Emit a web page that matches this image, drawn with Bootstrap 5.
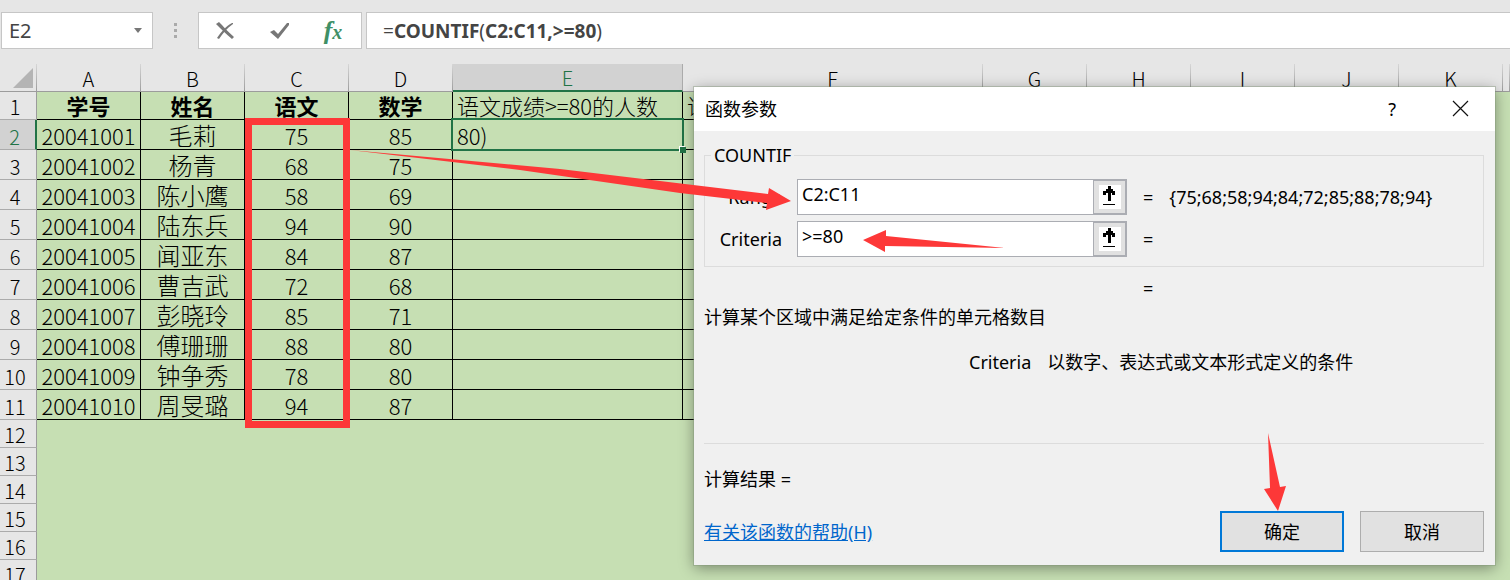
<!DOCTYPE html>
<html lang="zh-CN">
<head>
<meta charset="utf-8">
<meta name="viewport" content="width=device-width, initial-scale=1">
<title>COUNTIF</title>
<link href="https://cdn.jsdelivr.net/npm/bootstrap@5.3.0/dist/css/bootstrap.min.css" rel="stylesheet">
<style>
  body { background: #e6e6e6; color: #000; font-family: "Noto Sans CJK SC", sans-serif; }
  .workbook { min-height: 100vh; }
  .ui-font { font-family: "Noto Sans", "Noto Sans CJK SC", sans-serif; }

  .formula-bar { padding: 12px 0 15px 1px; background: #e6e6e6; }
  .bar-box { height: 37px; border: 1px solid #c6c6c6; background: #fff; }
  .name-box { width: 152px; padding: 0 9px 0 7px; }
  .name-box input { font-size: 20px; line-height: 24px; color: #444; min-width: 0; }
  .bar-tools { width: 164px; padding: 0 16px; }
  .bar-tools button { width: 24px; height: 24px; }
  .fx-mark { font: italic bold 26px/24px "Liberation Serif", serif; color: #3f9066; }
  .fx-mark small { font-size: 20px; }
  .grip { width: 45px; }
  .formula-input { font-size: 19px; line-height: 24px; color: #444; padding-left: 16px; border-right: 0; }

  .sheet-area { background: #c6dfb3; overflow: hidden; }
  .grid-table { table-layout: fixed; border-collapse: separate; border-spacing: 0; font-size: 22px; line-height: 24px; font-weight: 300; }
  .grid-table th, .grid-table td { padding: 0; height: 30px; text-align: center; vertical-align: bottom; white-space: nowrap; font-weight: inherit; }
  .grid-table .col-index { width: 37px; }
  .grid-table .col-std { width: 104px; }
  .grid-table .col-e { width: 230px; }
  .grid-table .col-f { width: 300px; }
  .grid-table thead th { height: 28px; font-size: 20px; background: #e6e6e6; border-bottom: 1px solid #9b9b9b; border-right: 1px solid; border-image: linear-gradient(#d8d8d8, #9b9b9b) 1; }
  .grid-table thead th.picked { background: #d2d2d2; color: #217346; border-image: none; border-right-color: #ababab; border-bottom: 2px solid #217346; }
  .grid-table tbody th { background: #e6e6e6; font-size: 20px; border-right: 1px solid #9b9b9b; border-bottom: 1px solid #ababab; padding-right: 6px; }
  .grid-table tbody th.picked { background: #d2d2d2; color: #217346; border-right: 2px solid #217346; }
  .grid-table .short th, .grid-table .short td { height: 28px; }
  .grid-table .data td { border-right: 1px solid #000; border-bottom: 1px solid #000; padding: 0 0 2px; }
  .data:not(.titles) td:nth-child(3) { font-size: 24px; }
  .grid-table .titles td { font-weight: 700; }
  .grid-table .data td.note, .grid-table .data td.editing { font-weight: 300; text-align: left; padding-left: 4px; }
  .corner { display: block; margin: 0 3px 3px auto; }
  .cursor-box { left: 451px; top: 118px; width: 233px; height: 33px; border: 2px solid #217346; }
  .cursor-box::after { content: ""; position: absolute; right: -4px; bottom: -4px; width: 6px; height: 6px; background: #217346; box-shadow: -1px -1px 0 #fff; }
  .range-box { left: 245px; top: 118px; width: 105px; height: 310px; border: 7px solid #fd3838; }

  .dialog-window { left: 694px; right: 15px; top: 87px; background: #f0f0f0; font-size: 18px; line-height: 24px; box-shadow: 0 3px 14px rgba(0,0,0,.4); outline: 1px solid rgba(130,150,120,.4); }
  .dialog-title { height: 44px; background: #fff; padding: 0 25px 0 11px; }
  .dialog-content { padding: 24px 11px 13px 10px; }
  .arg-group { border: 1px solid #dcdcdc; height: 112px; padding: 23px 0 0; position: relative; }
  .arg-group legend { position: absolute; top: -13px; left: 6px; width: auto; padding: 0 3px; background: #f0f0f0; font-size: 18px; line-height: 24px; }
  .arg-row { height: 36px; margin-bottom: 6px; }
  .arg-row label { width: 77px; text-align: right; }
  .arg-field { width: 330px; height: 36px; border: 1px solid #abadb3; background: #fff; margin-left: 15px; }
  .arg-field input { padding: 0 4px 7px; min-width: 0; }
  .arg-field button { width: 33px; background: #e1e1e1; border: solid #abadb3; border-width: 1px 1px 1px 1px; }
  .arg-value { padding-left: 16px; }
  .result-eq { margin: 9px 0 5px 439px; }
  .arg-help { margin: 21px 0 0 265px; gap: 16px; }
  .rule { border-top: 1px solid #dcdcdc; margin-top: 69px; }
  .calc-result { margin-top: 23px; }
  .dialog-foot { margin-top: 20px; gap: 16px; }
  .dialog-foot a { color: #0066cc; }
  .push { width: 124px; height: 41px; background: #e1e1e1; border: 1px solid #adadad; font-size: 18px; line-height: 24px; }
  .push.default { border: 2px solid #0078d7; }
  .bare { border: 0; background: transparent; padding: 0; outline: 0; }
  .marks { left: 0; top: 0; pointer-events: none; }
</style>
<script src="https://cdn.jsdelivr.net/npm/bootstrap@5.3.0/dist/js/bootstrap.bundle.min.js"></script>
</head>
<body>
<main class="workbook position-relative overflow-hidden d-flex flex-column vh-100">
  <div class="formula-bar ui-font d-flex">
    <div class="bar-box name-box d-flex align-items-center">
      <input class="bare flex-grow-1" type="text" value="E2" aria-label="名称框">
      <svg class="flex-shrink-0" width="9" height="5" aria-hidden="true"><path d="M0 0h8L4 5z" fill="#777"/></svg>
    </div>
    <div class="grip d-flex justify-content-center align-items-center">
      <svg width="3" height="16" fill="#aaa" aria-hidden="true"><path d="M0 0h3v3H0zM0 6h3v3H0zM0 12h3v3H0z"/></svg>
    </div>
    <div class="bar-box bar-tools d-flex justify-content-between align-items-center">
      <button class="bare d-flex align-items-center" type="button" aria-label="取消输入">
        <svg width="20" height="18" viewBox="0 0 20 18"><path d="M1 2L4 0C8 4 13 10 19 15L17 17C11 12 6 7 1 2z" fill="#777"/><path d="M18 1v1C12 6 8 11 4 17L2 16C6 10 11 4 17 1z" fill="#777"/></svg>
      </button>
      <button class="bare d-flex align-items-center justify-content-center" type="button" aria-label="输入">
        <svg width="20" height="18" viewBox="0 0 20 18"><path d="M0 10l4-2 4 4L17 1h2v2L8 17z" fill="#777"/></svg>
      </button>
      <button class="bare fx-mark" type="button" aria-label="插入函数">f<small>x</small></button>
    </div>
    <div class="bar-box formula-input flex-grow-1 d-flex align-items-center ms-1">
      <div role="textbox" aria-label="编辑栏">=<b>COUNTIF</b>(<b>C2:C11,&gt;=80</b>)</div>
    </div>
  </div>

  <div class="sheet-area flex-grow-1">
    <table class="grid-table w-100">
      <colgroup><col class="col-index"><col class="col-std"><col class="col-std"><col class="col-std"><col class="col-std"><col class="col-e"><col class="col-f"><col class="col-std"><col class="col-std"><col class="col-std"><col class="col-std"><col class="col-std"><col></colgroup>
      <thead><tr><th aria-label="全选"><svg class="corner" width="20" height="20"><path d="M20 0v20H0z" fill="#b4b4b4"/></svg></th><th>A</th><th>B</th><th>C</th><th>D</th><th class="picked">E</th><th>F</th><th>G</th><th>H</th><th>I</th><th>J</th><th>K</th><th></th></tr></thead>
      <tbody>
        <tr class="data titles short"><th>1</th><td>学号</td><td>姓名</td><td>语文</td><td>数学</td><td class="note">语文成绩&gt;=80的人数</td><td class="note">语</td></tr>
        <tr class="data"><th class="picked">2</th><td>20041001</td><td>毛莉</td><td>75</td><td>85</td><td class="editing">80)</td><td></td></tr>
        <tr class="data"><th>3</th><td>20041002</td><td>杨青</td><td>68</td><td>75</td><td></td><td></td></tr>
        <tr class="data"><th>4</th><td>20041003</td><td>陈小鹰</td><td>58</td><td>69</td><td></td><td></td></tr>
        <tr class="data"><th>5</th><td>20041004</td><td>陆东兵</td><td>94</td><td>90</td><td></td><td></td></tr>
        <tr class="data"><th>6</th><td>20041005</td><td>闻亚东</td><td>84</td><td>87</td><td></td><td></td></tr>
        <tr class="data"><th>7</th><td>20041006</td><td>曹吉武</td><td>72</td><td>68</td><td></td><td></td></tr>
        <tr class="data"><th>8</th><td>20041007</td><td>彭晓玲</td><td>85</td><td>71</td><td></td><td></td></tr>
        <tr class="data"><th>9</th><td>20041008</td><td>傅珊珊</td><td>88</td><td>80</td><td></td><td></td></tr>
        <tr class="data"><th>10</th><td>20041009</td><td>钟争秀</td><td>78</td><td>80</td><td></td><td></td></tr>
        <tr class="data"><th>11</th><td>20041010</td><td>周旻璐</td><td>94</td><td>87</td><td></td><td></td></tr>
        <tr class="short"><th>12</th></tr>
        <tr class="short"><th>13</th></tr>
        <tr class="short"><th>14</th></tr>
        <tr class="short"><th>15</th></tr>
        <tr class="short"><th>16</th></tr>
        <tr class="short"><th>17</th></tr>
      </tbody>
    </table>
  </div>
  <div class="cursor-box position-absolute"></div>

  <section class="dialog-window ui-font position-absolute" role="dialog" aria-labelledby="dlg-title">
    <header class="dialog-title d-flex align-items-center">
      <span id="dlg-title" class="me-auto">函数参数</span>
      <button class="bare me-5" type="button" aria-label="帮助">?</button>
      <button class="bare d-flex ms-2" type="button" aria-label="关闭"><svg width="18" height="18"><path d="M1 1l15 15M16 1L1 16" stroke="#111" stroke-width="1.2"/></svg></button>
    </header>
    <div class="dialog-content">
      <fieldset class="arg-group">
        <legend>COUNTIF</legend>
        <div class="arg-row d-flex align-items-center">
          <label for="arg-range">Range</label>
          <div class="arg-field d-flex">
            <input id="arg-range" class="bare flex-grow-1" type="text" value="C2:C11">
            <button class="p-0 d-flex align-items-center justify-content-center" type="button" aria-label="选择区域"><svg width="22" height="24"><path fill="#fff" d="M0 0h22v24H0z"/><path d="M9 1h3v3h2v2h2v4h-3V8h-1v8H9V8H7v2H4V6h3V4h2zM4 19h12v1H4z"/></svg></button>
          </div>
          <span class="arg-value">=</span><span class="arg-value">{75;68;58;94;84;72;85;88;78;94}</span>
        </div>
        <div class="arg-row d-flex align-items-center">
          <label for="arg-criteria">Criteria</label>
          <div class="arg-field d-flex">
            <input id="arg-criteria" class="bare flex-grow-1" type="text" value="&gt;=80">
            <button class="p-0 d-flex align-items-center justify-content-center" type="button" aria-label="选择条件"><svg width="22" height="24"><path fill="#fff" d="M0 0h22v24H0z"/><path d="M9 1h3v3h2v2h2v4h-3V8h-1v8H9V8H7v2H4V6h3V4h2zM4 19h12v1H4z"/></svg></button>
          </div>
          <span class="arg-value">=</span>
        </div>
      </fieldset>
      <div class="result-eq">=</div>
      <div>计算某个区域中满足给定条件的单元格数目</div>
      <div class="arg-help d-flex"><span>Criteria</span><span>以数字、表达式或文本形式定义的条件</span></div>
      <div class="rule"></div>
      <div class="calc-result">计算结果 =</div>
      <footer class="dialog-foot d-flex align-items-center">
        <a class="me-auto" href="#">有关该函数的帮助(H)</a>
        <button class="push default" type="button">确定</button>
        <button class="push" type="button">取消</button>
      </footer>
    </div>
  </section>

  <div class="range-box position-absolute"></div>
  <svg class="marks position-absolute" width="1510" height="580" fill="#fd3838" aria-hidden="true">
    <path d="M350 150L560 169L768 194L769 188L791 201L766 210L767 203L680 193L520 170Z"/>
    <path d="M1005 248L886 236V230L863 240L885 252V246Z"/>
    <path d="M1268 433L1280 487L1286 486L1278 511L1264 489L1270 488Z"/>
  </svg>
</main>
</body>
</html>
